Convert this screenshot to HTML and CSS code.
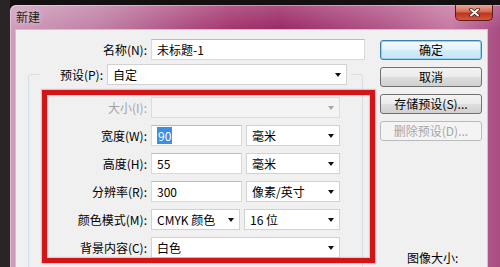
FILE: index.html
```html
<!DOCTYPE html>
<html lang="zh-CN">
<head>
    <meta charset="UTF-8">
    <meta name="viewport" content="width=device-width, initial-scale=1.0">
    <title>新建</title>
    <link rel="stylesheet" href="styles.css">
</head>
<body>
    <div class="screen">
        <div class="window">
            <div class="titlebar">
                <span class="title">新建</span>
                <button class="close" aria-label="关闭">
                    <svg width="11" height="9" viewBox="0 0 11 9">
                        <path d="M2 1.5 L9 7.5 M9 1.5 L2 7.5" stroke="#4a1410" stroke-width="3.6" stroke-linecap="round"/>
                        <path d="M2 1.5 L9 7.5 M9 1.5 L2 7.5" stroke="#fff" stroke-width="2" stroke-linecap="round"/>
                    </svg>
                </button>
            </div>

            <div class="client">
                <div class="main">
                    <div class="row name-row">
                        <label class="lbl">名称(N):</label>
                        <div class="field w-name">未标题-1</div>
                    </div>

                    <fieldset class="group">
                        <legend class="preset">
                            <label class="lbl preset-lbl">预设(P):</label>
                            <div class="combo w-preset"><span>自定</span><span class="arrow"></span></div>
                        </legend>

                        <div class="fields">
                            <div class="row">
                                <label class="lbl off">大小(I):</label>
                                <div class="combo w-full disabled"><span></span><span class="arrow"></span></div>
                            </div>
                            <div class="row">
                                <label class="lbl">宽度(W):</label>
                                <div class="field w-half"><span class="sel">90</span></div>
                                <div class="combo w-unit"><span>毫米</span><span class="arrow"></span></div>
                            </div>
                            <div class="row">
                                <label class="lbl">高度(H):</label>
                                <div class="field w-half">55</div>
                                <div class="combo w-unit"><span>毫米</span><span class="arrow"></span></div>
                            </div>
                            <div class="row">
                                <label class="lbl">分辨率(R):</label>
                                <div class="field w-half">300</div>
                                <div class="combo w-unit"><span>像素/英寸</span><span class="arrow"></span></div>
                            </div>
                            <div class="row">
                                <label class="lbl">颜色模式(M):</label>
                                <div class="combo w-mode"><span>CMYK 颜色</span><span class="arrow"></span></div>
                                <div class="combo w-bits"><span>16 位</span><span class="arrow"></span></div>
                            </div>
                            <div class="row">
                                <label class="lbl">背景内容(C):</label>
                                <div class="combo w-full"><span>白色</span><span class="arrow"></span></div>
                            </div>
                        </div>
                    </fieldset>
                </div>

                <div class="side">
                    <button class="btn default">确定</button>
                    <button class="btn">取消</button>
                    <button class="btn">存储预设(S)...</button>
                    <button class="btn" disabled>删除预设(D)...</button>
                    <div class="info">图像大小:</div>
                </div>

                <div class="mark"></div>
            </div>
        </div>
    </div>
</body>
</html>
```

FILE: styles.css
```css
* { box-sizing: border-box; }
body { margin: 0; background: #141012; font-family: "Noto Sans CJK SC", "Noto Sans", sans-serif; font-size: 12px; color: #000; overflow: hidden; }
.screen { height: 267px; overflow: hidden; padding: 5px 0 0 10px; background: linear-gradient(to right, #2a2426 0, #2a2426 10px, #141012 10px); }

.window { height: 300px; padding: 0 12px 0 5px; border-radius: 6px 0 0 0; background: linear-gradient(to right, #cf9dbb 0%, #c180a6 18%, #a4366f 45%, #9c2a66 55%, #b45a8c 78%, #c77aa2 90%, #a84c82 100%); box-shadow: inset 1px 1px 0 rgba(255,255,255,.35); }
.titlebar { height: 24px; display: flex; align-items: flex-start; background: linear-gradient(rgba(255,255,255,.18), rgba(255,255,255,0)); margin: 0 -12px 0 -5px; padding: 0 12px 0 5px; border-radius: 6px 0 0 0; }
.title { padding: 4px 0 0 1px; line-height: 16px; color: #1a1a1a; text-shadow: 0 0 5px rgba(255,255,255,.7); }
.close { margin-left: auto; margin-right: -5px; width: 38px; height: 16px; padding: 0; border: 1px solid #5e1a16; border-top: none; border-radius: 0 0 5px 5px; background: linear-gradient(#eba896, #d66a52 45%, #c0341f 55%, #d2583c); display: flex; align-items: center; justify-content: center; }

.client { position: relative; display: flex; height: 280px; background: #f0f0f0; border: 1px solid #d9bccd; }
.main { width: 364px; }

.row { display: flex; align-items: center; gap: 4px; height: 21px; }
.name-row { margin-top: 9px; }
.name-row .lbl { width: 131px; }
.lbl { width: 118px; text-align: right; white-space: nowrap; }
.lbl.off { color: #a3a3a3; }

.field, .combo { height: 21px; line-height: 19px; padding: 0 5px; background: #fff; border: 1px solid #d6d9de; border-top-color: #b9bcc2; white-space: nowrap; }
.combo { display: flex; align-items: center; justify-content: space-between; padding-right: 5px; border-color: #d2d2d2; }
.combo.disabled { background: #f4f4f4; border-color: #dcdcdc; }
.arrow { width: 0; height: 0; border-left: 3.5px solid transparent; border-right: 3.5px solid transparent; border-top: 4px solid #111; }
.disabled .arrow { border-top-color: #a8a8a8; }
.sel { background: #3d8ee4; color: #fff; padding: 0 1px; }

.w-name { width: 214px; }
.w-preset { width: 240px; }
.w-full { width: 189px; }
.w-half { width: 91px; }
.w-unit { width: 94px; }
.w-mode { width: 89px; }
.w-bits { width: 96px; }

.group { margin: 4px 0 0 12px; width: 335px; padding: 12px 0 40px 0; border: 1px solid #d5dfe5; border-radius: 3px; min-inline-size: 0; }
.preset { margin-left: 11px; padding: 0 4px 0 0; display: flex; align-items: center; gap: 4px; }
.preset-lbl { width: 63px; }
.fields { display: flex; flex-direction: column; gap: 7px; }

.side { width: 102px; padding-top: 10px; display: flex; flex-direction: column; gap: 7px; }
.btn { height: 20px; padding: 0; font: inherit; line-height: 18px; color: #000; border: 1px solid #707070; border-radius: 3px; background: linear-gradient(#f3f3f3 0%, #ebebeb 50%, #dedede 51%, #d0d0d0 100%); }
.btn.default { border-color: #3c7fb1; box-shadow: inset 0 0 0 1px #8fd4f5; background: linear-gradient(#f2f9fd 0%, #e6f3fb 50%, #d4ecf9 51%, #c6e4f5 100%); }
.btn:disabled { border-color: #b8bcbf; background: #f4f4f4; color: #a6a6a6; }
.info { margin-top: 102px; padding-left: 27px; line-height: 16px; }

.mark { position: absolute; left: 26px; top: 60px; width: 333px; height: 173px; border: 5px solid #d0151b; box-shadow: 0 0 1px 1px rgba(235,140,140,.5), inset 0 0 1px 1px rgba(235,140,140,.5); }
```
